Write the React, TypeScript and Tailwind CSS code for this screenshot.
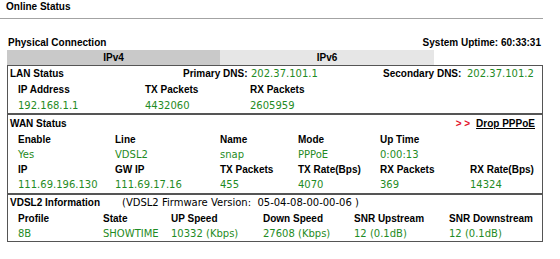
const label = "font-bold text-black";
const value = "font-['DejaVu_Sans',sans-serif] text-[#1f8b24]";

type Col = { w?: string; text: string };

const Row = ({ cols, kind, h }: { cols: Col[]; kind: "label" | "value"; h: string }) => (
  <div className={`flex items-center ${h}`}>
    {cols.map((c, i) => (
      <div key={i} className={`${c.w ?? "flex-1"} ${i === 0 ? "pl-[10px]" : ""} ${kind === "label" ? label : value} whitespace-nowrap`}>
        {c.text}
      </div>
    ))}
  </div>
);

const lanW = ["w-[137px]", "w-[105px]", undefined];
const wanW = ["w-[107px]", "w-[105px]", "w-[78px]", "w-[82px]", "w-[90px]", undefined];
const vdslW = ["w-[95px]", "w-[68px]", "w-[92px]", "w-[91px]", "w-[95px]", undefined];

const cols = (ws: (string | undefined)[], texts: string[]): Col[] => texts.map((t, i) => ({ w: ws[i], text: t }));

export default function App() {
  return (
    <div className="w-[560px] h-[259px] bg-white font-['Liberation_Sans',Arial,sans-serif] text-[10px] leading-[12px] overflow-hidden">
      {/* Title */}
      <div className="pt-[1px] pl-[6px] h-[13px] font-bold text-black">Online Status</div>
      <div className="mt-[5px] h-px w-[543px] bg-[#a3a3a3]" />

      <div className="ml-[7px] w-[536px]">
        {/* Physical connection header */}
        <div className="mt-[17px] h-[14px] flex items-center justify-between pl-[1px] pr-[2px] font-bold text-black">
          <span>Physical Connection</span>
          <span>System Uptime: 60:33:31</span>
        </div>

        {/* Tabs */}
        <div className="flex h-[15px]">
          <div className="w-[213px] bg-[#c9c9c9] flex items-center justify-center font-bold text-black">IPv4</div>
          <div className="w-[214px] bg-[#e6e6e6] flex items-center justify-center font-bold text-black">IPv6</div>
        </div>

        {/* LAN */}
        <div className="border border-[#555]">
          <div className="flex items-center h-[16px]">
            <div className={`w-[175px] pl-[2px] ${label}`}>LAN Status</div>
            <div className={`w-[68px] ${label}`}>Primary DNS:</div>
            <div className={`w-[132px] ${value}`}>202.37.101.1</div>
            <div className={`w-[84px] ${label}`}>Secondary DNS:</div>
            <div className={`flex-1 ${value}`}>202.37.101.2</div>
          </div>
          <Row kind="label" h="h-[16px]" cols={cols(lanW, ["IP Address", "TX Packets", "RX Packets"])} />
          <Row kind="value" h="h-[15px]" cols={cols(lanW, ["192.168.1.1", "4432060", "2605959"])} />
        </div>

        {/* WAN */}
        <div className="border border-[#555] pb-px">
          <div className="flex items-center justify-between h-[17px] pl-[2px] pr-[7px]">
            <span className={label}>WAN Status</span>
            <span className="font-bold">
              <span className="text-[#e3122b] whitespace-pre">{"> >"}</span>
              <span className="ml-[6px] underline text-black">Drop PPPoE</span>
            </span>
          </div>
          <Row kind="label" h="h-[15px]" cols={cols(wanW, ["Enable", "Line", "Name", "Mode", "Up Time", ""])} />
          <Row kind="value" h="h-[15px]" cols={cols(wanW, ["Yes", "VDSL2", "snap", "PPPoE", "0:00:13", ""])} />
          <Row kind="label" h="h-[15px]" cols={cols(wanW, ["IP", "GW IP", "TX Packets", "TX Rate(Bps)", "RX Packets", "RX Rate(Bps)"])} />
          <Row kind="value" h="h-[15px]" cols={cols(wanW, ["111.69.196.130", "111.69.17.16", "455", "4070", "369", "14324"])} />
        </div>

        {/* VDSL2 */}
        <div className="border border-[#555]">
          <div className="flex items-center h-[16px]">
            <div className={`w-[114px] pl-[2px] ${label} whitespace-nowrap`}>VDSL2 Information</div>
            <div className="font-['DejaVu_Sans',sans-serif] text-black whitespace-pre">(VDSL2 Firmware Version:  05-04-08-00-00-06 )</div>
          </div>
          <Row kind="label" h="h-[15px]" cols={cols(vdslW, ["Profile", "State", "UP Speed", "Down Speed", "SNR Upstream", "SNR Downstream"])} />
          <Row kind="value" h="h-[15px]" cols={cols(vdslW, ["8B", "SHOWTIME", "10332 (Kbps)", "27608 (Kbps)", "12 (0.1dB)", "12 (0.1dB)"])} />
        </div>
      </div>
    </div>
  );
}
